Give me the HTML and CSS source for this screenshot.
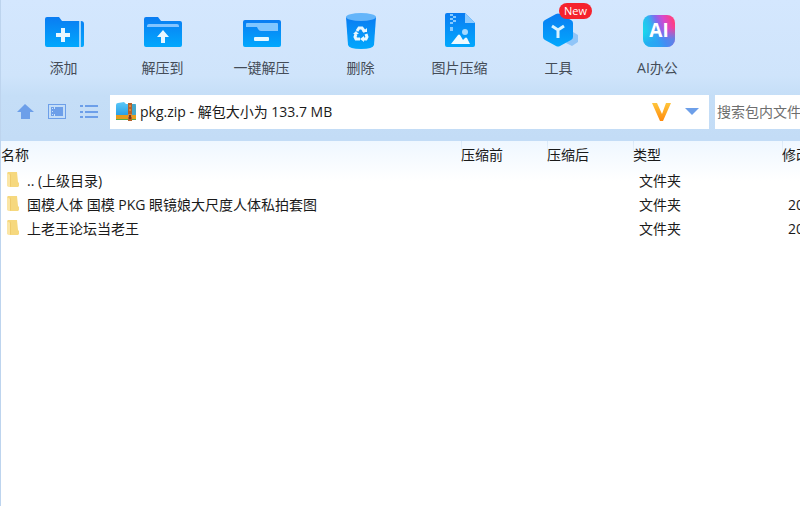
FILE: index.html
```html
<!DOCTYPE html>
<html lang="zh-CN">
<head>
<meta charset="utf-8">
<meta name="viewport" content="width=device-width, initial-scale=1">
<title>pkg.zip</title>
<link rel="stylesheet" href="styles.css">
</head>
<body>
<svg class="defs" width="0" height="0" aria-hidden="true">
  <defs>
    <linearGradient id="blue" x1="0" y1="0" x2="0" y2="1"><stop offset="0" stop-color="#0a7cf2"/><stop offset="1" stop-color="#02a8fd"/></linearGradient>
    <linearGradient id="ai" x1="0" y1="0.7" x2="1" y2="0.3"><stop offset="0" stop-color="#12e2ea"/><stop offset="0.35" stop-color="#2fb4f2"/><stop offset="0.55" stop-color="#8568ee"/><stop offset="0.75" stop-color="#d848cc"/><stop offset="1" stop-color="#ff3f80"/></linearGradient>
    <linearGradient id="aiLow" x1="0.2" y1="0" x2="0.35" y2="1"><stop offset="0.5" stop-color="#2a9af5" stop-opacity="0"/><stop offset="0.85" stop-color="#2a9af5"/></linearGradient>
    <linearGradient id="gold" x1="0" y1="0" x2="0" y2="1"><stop offset="0" stop-color="#ffc63c"/><stop offset="1" stop-color="#ff8a0c"/></linearGradient>
    <linearGradient id="book" x1="0" y1="0" x2="0" y2="1"><stop offset="0" stop-color="#5cc9f8"/><stop offset="1" stop-color="#249de6"/></linearGradient>
    <symbol id="folder" viewBox="0 0 12 16">
      <path d="M0 1l1-1h9l1 10 1 1v3l-1 1H3l-3-1z" fill="#f6d87e"/>
      <path d="M0 1l3 2v12l-3-1z" fill="#fbe6a6"/>
      <path d="M3 3l1-2v13l-1 1z" fill="#efcb6c"/>
    </symbol>
  </defs>
</svg>
<main class="window">
  <nav class="toolbar">
    <button class="tool" type="button">
      <svg width="48" height="44" viewBox="0 0 48 44"><path d="M5 11q0-2 2-2h12l3 4h19q3 0 3 3v21q0 2-2 2H7q-2 0-2-2z" fill="url(#blue)"/><path d="M39 13h2v26h-2z" fill="#9bd4ff"/><path d="M21 20h4v5h5v4h-5v5h-4v-5h-5v-4h5z" fill="#e9f7ff"/></svg>
      <span>添加</span>
    </button>
    <button class="tool" type="button">
      <svg width="48" height="44" viewBox="0 0 48 44"><path d="M5 11q0-2 2-2h12l3 4h19q2 0 2 2v22q0 2-2 2H7q-2 0-2-2z" fill="url(#blue)"/><path d="M8 19v-1q0-2 2-2h28q2 0 2 2v1z" fill="#83c4ff"/><path d="M24 22l6 7h-4v6h-4v-6h-4z" fill="#e9f7ff"/></svg>
      <span>解压到</span>
    </button>
    <button class="tool" type="button">
      <svg width="48" height="44" viewBox="0 0 48 44"><rect x="5" y="12" width="38" height="27" rx="2" fill="url(#blue)"/><path d="M8 18v-2q0-1 1-1h30q1 0 1 1v7H23q-2 0-3-2l-1-2H8z" fill="#80c5ff"/><rect x="16" y="29" width="15" height="4" rx="1" fill="#e6f8ff"/></svg>
      <span>一键解压</span>
    </button>
    <button class="tool" type="button">
      <svg width="48" height="44" viewBox="0 0 48 44"><path d="M9 9h30l-2 28q-1 4-13 4t-13-4z" fill="url(#blue)"/><ellipse cx="24" cy="9" rx="15" ry="4" fill="#64b5fa"/><g fill="none" stroke="#e6f7ff" stroke-width="3"><path d="M20 23l2-3h3l3 4M19 26l-1 3 1 2h4M26 31h3l1-2-1-3"/></g><path d="M27 28v6l-4-3zM25 24h5v-4zM16 26l3-3 3 3z" fill="#e6f7ff"/></svg>
      <span>删除</span>
    </button>
    <button class="tool" type="button">
      <svg width="48" height="44" viewBox="0 0 48 44"><path d="M9 7q0-2 2-2h18l10 10v22q0 2-2 2H11q-2 0-2-2z" fill="url(#blue)"/><path d="M29 5l10 10H29z" fill="#8ccaff"/><path d="M14 6h3v2h-3zM17 8h3v2h-3zM14 10h3v2h-3zM17 12h3v2h-3zM14 14h3v2h-3zM14 19h3v4h-3z" fill="#86caff"/><circle cx="29" cy="24" r="3" fill="#a5daff"/><path d="M15 36l7-9q1-1 2 0l3 5 2-2q1-1 2 0l3 6z" fill="#eefaff"/></svg>
      <span>图片压缩</span>
    </button>
    <button class="tool" type="button">
      <svg width="48" height="44" viewBox="0 0 48 44"><path d="M38 24l5 3v7l-6 4-6-3z" fill="#91c5f8"/><path d="M21 6q2-1 4 0l11 6q2 1 2 3v14q0 2-2 3l-11 6q-2 1-4 0l-11-6q-2-1-2-3V15q0-2 2-3z" fill="url(#blue)"/><path d="M17 18l6 4 6-4M23 22v8" fill="none" stroke="#d9f2ff" stroke-width="3"/></svg>
      <span>工具</span>
      <em class="badge">New</em>
    </button>
    <button class="tool" type="button">
      <svg width="48" height="44" viewBox="0 0 48 44"><rect x="9" y="7" width="32" height="32" rx="8" fill="url(#ai)"/><rect x="9" y="7" width="32" height="32" rx="8" fill="url(#aiLow)" opacity="0.7"/><text class="ai-text" x="25" y="29" text-anchor="middle">AI</text></svg>
      <span>AI办公</span>
    </button>
  </nav>

  <div class="pathbar">
    <div class="nav-buttons">
      <button type="button" aria-label="向上"><svg width="18" height="16" viewBox="0 0 18 16"><path d="M9 0l9 8h-4v7H5V8H1z" fill="#6d9fe9"/></svg></button>
      <button type="button" aria-label="预览"><svg width="18" height="16" viewBox="0 0 18 16"><path d="M0 0h18v15H0zM1 1v13h16V1z" fill="#6d9fe9" fill-rule="evenodd"/><path d="M3 3h12v9H3z" fill="#6d9fe9"/><path d="M4 4h1v1H4zM4 7h1v1H4zM4 10h1v1H4zM6 3h1v2H6zM6 10h1v2H6z" fill="#c9e0fa"/></svg></button>
      <button type="button" aria-label="列表"><svg width="18" height="16" viewBox="0 0 18 16"><path d="M0 1h3v2H0zM5 1h13v2H5zM0 7h3v2H0zM5 7h13v2H5zM0 12h3v2H0zM5 12h13v2H5z" fill="#6d9fe9"/></svg></button>
    </div>
    <div class="address">
      <svg width="20" height="20" viewBox="0 0 20 20"><path d="M0 3q0-2 2-2l6-1 2 2h10v12H0z" fill="url(#book)"/><path d="M16 2h3l1 2v10h-4z" fill="#45a6c8"/><path d="M0 13h20v5H0z" fill="#e69c1d"/><path d="M0 17h20v1H0z" fill="#58a94b"/><path d="M12 1h4v18h-4z" fill="#b5622a"/><path d="M13 3h2v2h-2zM13 7h2v2h-2zM12 12h4v3h-4z" fill="#dc8538"/><path d="M13 13h2v4h-2z" fill="#70391b"/></svg>
      <input type="text" aria-label="路径" value="pkg.zip - 解包大小为 133.7 MB" readonly>
      <button type="button" aria-label="会员"><svg width="20" height="20" viewBox="0 0 20 20"><path d="M0 1h5l5 11 4-11h5l-8 18H8z" fill="url(#gold)"/></svg></button>
      <button type="button" aria-label="展开"><svg width="16" height="8" viewBox="0 0 16 8"><path d="M1 0h14L8 7z" fill="#6d9fe9"/></svg></button>
    </div>
    <input class="search" type="text" aria-label="搜索" placeholder="搜索包内文件">
  </div>

  <section class="files">
    <table>
      <colgroup><col class="c-name"><col class="c-size"><col class="c-size"><col class="c-type"><col></colgroup>
      <thead><tr><th>名称</th><th>压缩前</th><th>压缩后</th><th>类型</th><th>修改</th></tr></thead>
      <tbody>
        <tr><td class="name"><svg width="12" height="16"><use href="#folder"/></svg>.. (上级目录)</td><td></td><td></td><td>文件夹</td><td></td></tr>
        <tr><td class="name"><svg width="12" height="16"><use href="#folder"/></svg>国模人体 国模 PKG 眼镜娘大尺度人体私拍套图</td><td></td><td></td><td>文件夹</td><td>20</td></tr>
        <tr><td class="name"><svg width="12" height="16"><use href="#folder"/></svg>上老王论坛当老王</td><td></td><td></td><td>文件夹</td><td>20</td></tr>
      </tbody>
    </table>
  </section>
</main>
</body>
</html>
```
FILE: styles.css
```css
* {
  box-sizing: border-box;
}

body {
  margin: 0;
  font-family: "Open Sans", "Noto Sans CJK SC", sans-serif;
  font-size: 14px;
  line-height: 20px;
  color: #1a1a1a;
}

.defs {
  display: block;
}

svg {
  flex: none;
}

.window {
  display: flex;
  flex-direction: column;
  min-height: 100vh;
  border-left: 1px solid #bdd4ee;
  overflow: hidden;
  background: linear-gradient(#d4e7fe, #cfe4fb 76px, #c5def7 96px, #c3dcf6 140px);
}

button {
  padding: 0;
  border: 0;
  background: none;
  font: inherit;
  color: inherit;
}

.toolbar {
  display: flex;
  padding: 8px 0 0 13px;
}

.tool {
  position: relative;
  display: flex;
  flex-direction: column;
  align-items: center;
  gap: 6px;
  flex: none;
  width: 99px;
  color: #444c57;
}

.badge {
  position: absolute;
  top: -5px;
  left: 50px;
  padding: 0 5px;
  border-radius: 8px;
  background: #f5222d;
  color: #fff;
  font-size: 11px;
  line-height: 16px;
  font-style: normal;
}

.ai-text {
  font-family: "Open Sans", sans-serif;
  font-size: 19px;
  font-weight: 700;
  fill: #fff;
}

.pathbar {
  display: flex;
  gap: 6px;
  height: 63px;
  padding: 17px 0 12px 15px;
}

.nav-buttons {
  display: flex;
  align-items: center;
  gap: 14px;
  width: 88px;
}

.nav-buttons button {
  display: flex;
}

.address {
  display: flex;
  align-items: center;
  flex: 1;
  gap: 12px;
  padding: 0 9px 0 6px;
  background: #fff;
}

.address button {
  display: flex;
}

.address input {
  flex: 1;
  min-width: 0;
  margin-left: -8px;
  padding: 0;
  border: 0;
  background: none;
  font: inherit;
  color: inherit;
}

.search {
  flex: none;
  width: 120px;
  margin: 0 -35px 0 0;
  padding: 0 0 0 2px;
  border: 0;
  background: #fff;
  font: inherit;
}

.search::placeholder {
  color: #6e6e6e;
  opacity: 1;
}

.files {
  flex: 1;
  background: linear-gradient(#eff7ff, #fff 40px);
}

table {
  width: 100%;
  table-layout: fixed;
  border-collapse: collapse;
}

.c-name {
  width: 460px;
}

.c-size {
  width: 86px;
}

.c-type {
  width: 149px;
}

th,
td {
  overflow: hidden;
  padding: 0 0 0 6px;
  font-weight: 400;
  text-align: left;
  white-space: nowrap;
}

th {
  height: 28px;
  padding: 0;
}

th + th {
  background: linear-gradient(#d9e8f8, #eef6fe) no-repeat 0 0 / 1px 12px;
}

td {
  height: 24px;
}

.name svg {
  margin-right: 8px;
  vertical-align: -2px;
}
```
